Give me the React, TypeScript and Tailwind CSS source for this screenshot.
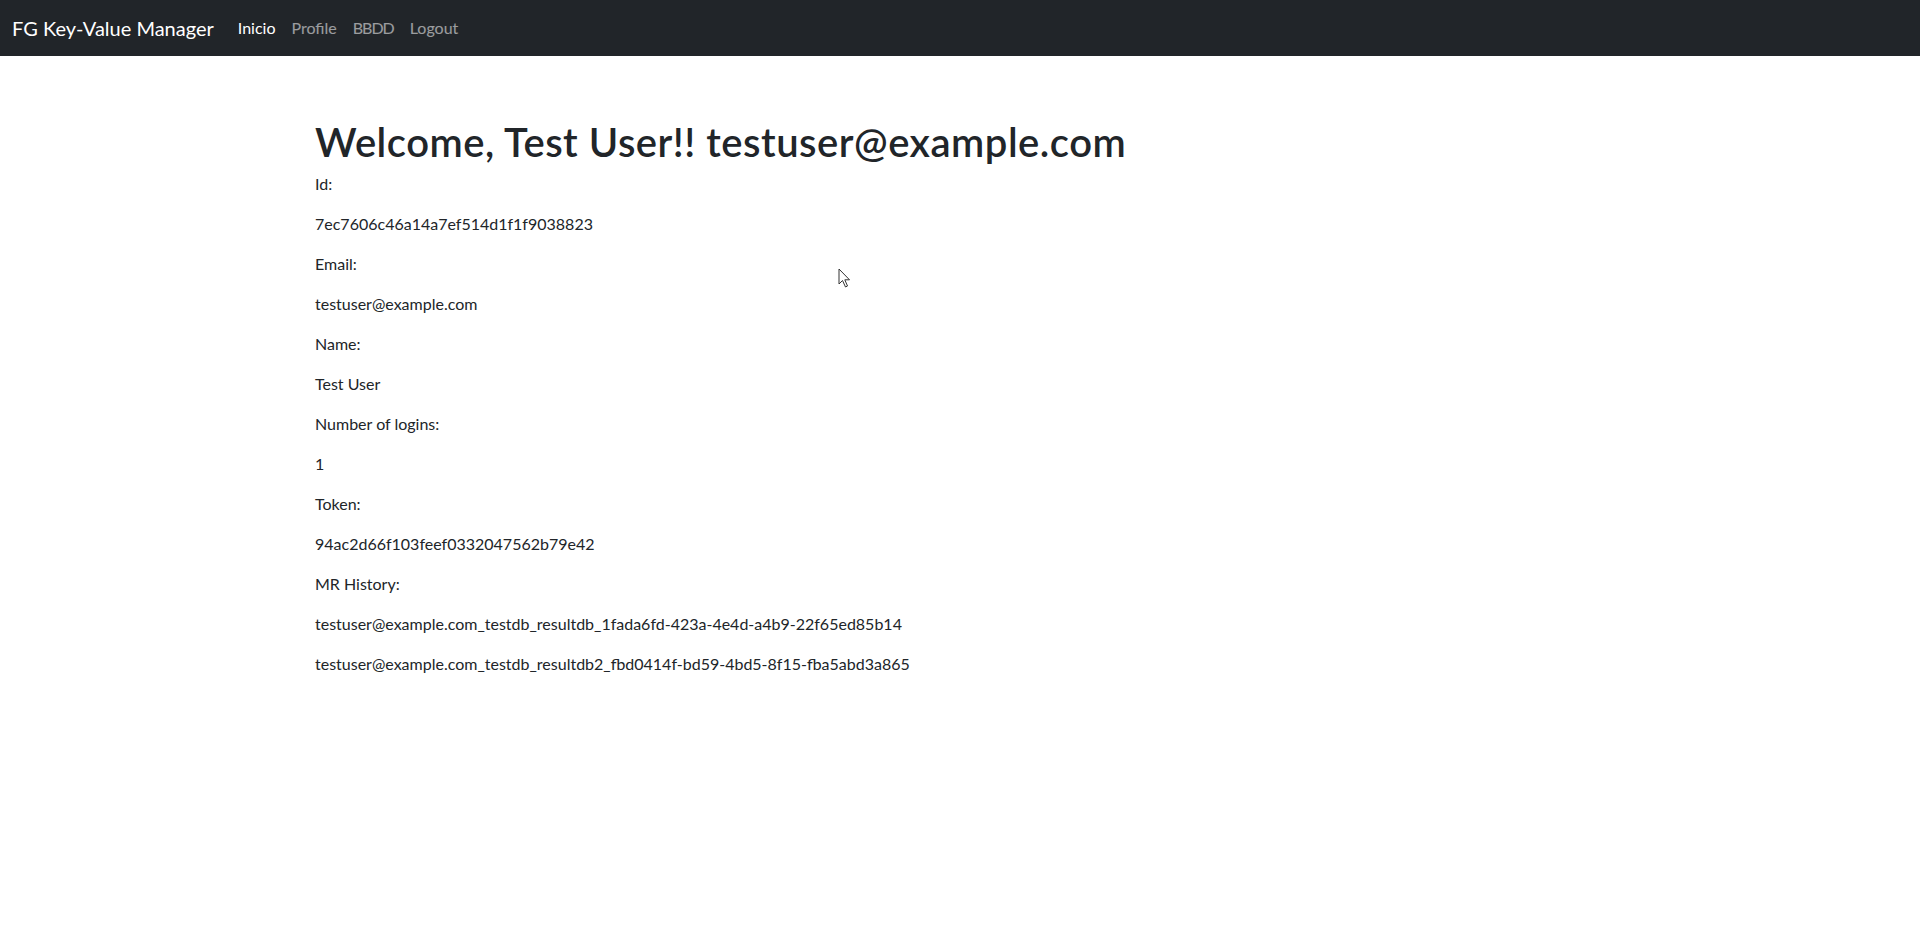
export default function App() {
  const rows: string[] = [
    "Id:",
    "7ec7606c46a14a7ef514d1f1f9038823",
    "Email:",
    "testuser@example.com",
    "Name:",
    "Test User",
    "Number of logins:",
    "1",
    "Token:",
    "94ac2d66f103feef0332047562b79e42",
    "MR History:",
    "testuser@example.com_testdb_resultdb_1fada6fd-423a-4e4d-a4b9-22f65ed85b14",
    "testuser@example.com_testdb_resultdb2_fbd0414f-bd59-4bd5-8f15-fba5abd3a865",
  ];
  return (
    <div
      className="relative min-h-[937px] bg-white text-[#212529]"
      style={{ fontFamily: 'Lato, "Open Sans", sans-serif' }}
    >
      <nav className="flex h-[56px] items-center bg-[#212529] px-[12px]">
        <span className="mr-[16px] text-[20px] leading-[30px] text-white">FG Key-Value Manager</span>
        <ul className="flex text-[16px] leading-[24px]">
          <li className="px-[8px] text-white">Inicio</li>
          <li className="px-[8px] text-white/55">Profile</li>
          <li className="px-[8px] tracking-[-1px] text-white/55">BBDD</li>
          <li className="px-[8px] text-white/55">Logout</li>
        </ul>
      </nav>
      <main className="mx-auto w-[1320px] pl-[15px] pr-[12px] pt-[60px]">
        <h1 className="mb-[6px] mt-[2px] text-[40px] font-semibold leading-[48px] tracking-[0.5px]">
          Welcome, Test User!! testuser@example.com
        </h1>
        {rows.map((r, i) => (
          <p key={i} className="mb-[16px] text-[16px] leading-[24px]">
            {r}
          </p>
        ))}
      </main>
      <svg
        className="pointer-events-none absolute left-[838px] top-[268px]"
        width="14"
        height="22"
        viewBox="0 0 14 22"
      >
        <path
          d="M1 1 L1 16 L4.5 12.5 L7.5 19 L9.5 18 L6.8 11.8 L11.5 11.8 Z"
          fill="white"
          stroke="#333"
          strokeWidth="1"
          strokeLinejoin="round"
        />
      </svg>
    </div>
  );
}
